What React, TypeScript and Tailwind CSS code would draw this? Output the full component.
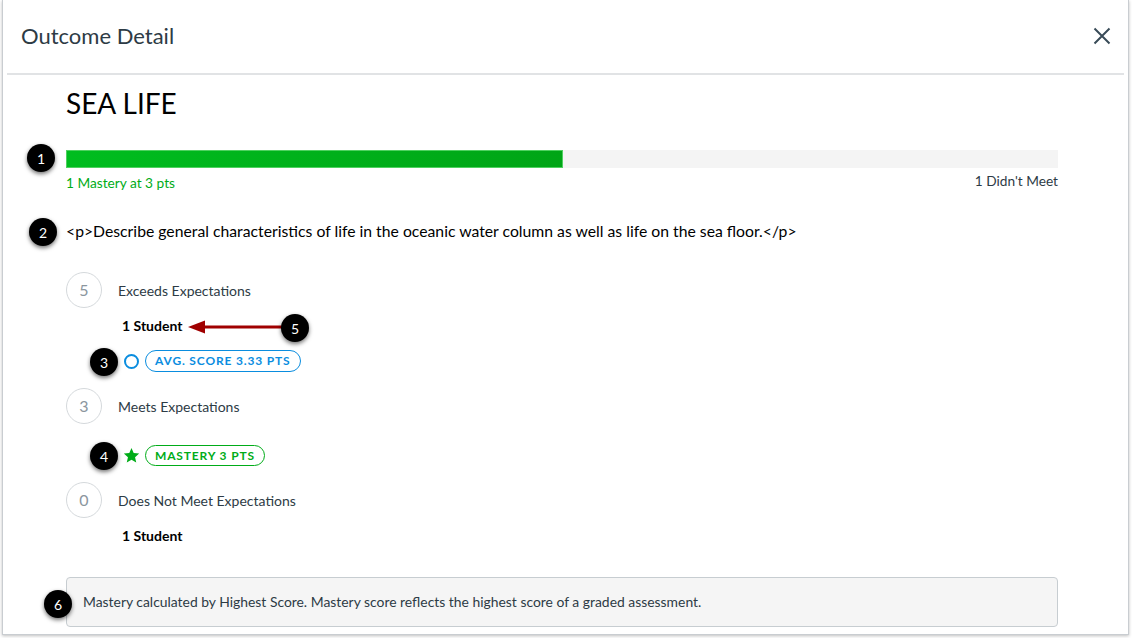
import React from 'react';

const font = { fontFamily: 'Lato, "Noto Sans", sans-serif' };

function Badge({ n, x, y }: { n: number; x: number; y: number }) {
  return (
    <div
      className="absolute flex h-[28px] w-[28px] items-center justify-center rounded-full bg-black text-[14px] text-white shadow-[0_2px_4px_rgba(0,0,0,0.55)]"
      style={{ left: x - 14, top: y - 14, fontFamily: 'Lato, sans-serif' }}
    >
      {n}
    </div>
  );
}

function Rating({ points, label }: { points: number; label: string }) {
  return (
    <div className="flex items-center gap-4">
      <div className="flex h-[36px] w-[36px] items-center justify-center rounded-full border border-[#d5d9dc] text-[16px] text-[#8b969e]">
        {points}
      </div>
      <span className="text-[14px] text-[#2d3b45]">{label}</span>
    </div>
  );
}

export default function App() {
  return (
    <div className="relative h-[638px] w-[1132px] overflow-hidden bg-white pl-[2px]" style={font}>
      <div className="h-[635px] w-[1127px] border border-t-0 border-[#c9cdd1] bg-white shadow-[0_1px_3px_rgba(0,0,0,0.25)]">
        <div className="flex h-[73px] items-center justify-between pb-[2px] pl-[18px] pr-[16px]">
          <h1 className="text-[22px] text-[#2d3b45]">Outcome Detail</h1>
          <svg width="20" height="20" viewBox="0 0 20 20" fill="none" stroke="#394b58" strokeWidth="2">
            <path d="M2.5 2.5l15 15M17.5 2.5l-15 15" />
          </svg>
        </div>
        <div className="mx-[4px] h-[2px] bg-[#e1e3e5]" />

        <div className="pl-[63px] text-[#2d3b45]">
          <h2 className="mt-[11px] text-[28px] leading-[34px] text-black">SEA LIFE</h2>

          <div className="mt-[30px] flex h-[18px] w-[992px] bg-[#f4f4f4]">
            <div className="h-full w-[497px] border border-[#4fd160] bg-[linear-gradient(90deg,#00bd1f,#00a516)]" />
          </div>
          <div className="mt-[5px] flex w-[992px] justify-between text-[13.7px] leading-[18px]">
            <span className="mt-[1px] text-[#00ac18]">1 Mastery at 3 pts</span>
            <span className="mt-[-1px] text-[#2d3b45]">1 Didn't Meet</span>
          </div>

          <p className="mt-[27px] text-[15.75px] leading-[24px] text-black">
            &lt;p&gt;Describe general characteristics of life in the oceanic water column as well as life on the sea floor.&lt;/p&gt;
          </p>

          <div className="mt-[29px]">
            <Rating points={5} label="Exceeds Expectations" />
          </div>
          <div className="ml-[56px] mt-[8px] text-[14px] font-bold leading-[20px] text-black">1 Student</div>
          <div className="ml-[58px] mt-[14px] flex h-[22px] items-center gap-[6px]">
            <span className="h-[15px] w-[15px] rounded-full border-2 border-[#0a8ddf]" />
            <span className="flex h-[22px] items-center rounded-full border border-[#0a8ddf] px-[9px] text-[12px] font-bold tracking-[0.07em] text-[#0a8ddf]">
              AVG. SCORE 3.33 PTS
            </span>
          </div>

          <div className="mt-[16px]">
            <Rating points={3} label="Meets Expectations" />
          </div>
          <div className="ml-[57px] mt-[21px] flex h-[21px] items-center gap-[5px]">
            <svg width="17" height="17" viewBox="0 0 24 24" fill="#00ac18">
              <path d="M12 1.5l3.1 7.1 7.7.7-5.8 5.1 1.7 7.6L12 18l-6.7 4 1.7-7.6-5.8-5.1 7.7-.7z" />
            </svg>
            <span className="flex h-[21px] items-center rounded-full border border-[#00ac18] px-[9px] text-[12px] font-bold tracking-[0.07em] text-[#00ac18]">
              MASTERY 3 PTS
            </span>
          </div>

          <div className="mt-[16px]">
            <Rating points={0} label="Does Not Meet Expectations" />
          </div>
          <div className="ml-[56px] mt-[8px] text-[14px] font-bold leading-[20px] text-black">1 Student</div>

          <div className="mt-[31px] flex h-[50px] w-[992px] items-center rounded-[4px] border border-[#c7cdd1] bg-[#f5f5f5] pl-[16px] text-[13.9px] text-[#2d3b45]">
            Mastery calculated by Highest Score. Mastery score reflects the highest score of a graded assessment.
          </div>
        </div>
      </div>

      <svg className="absolute left-[186px] top-[319px]" width="100" height="16" viewBox="0 0 100 16">
        <path d="M16 8H98" stroke="#a00000" strokeWidth="3" />
        <path d="M2 8L19 1.5V14.5Z" fill="#a00000" />
      </svg>

      <Badge n={1} x={41} y={158} />
      <Badge n={2} x={43} y={232} />
      <Badge n={3} x={104} y={362} />
      <Badge n={4} x={104} y={456} />
      <Badge n={5} x={295} y={328} />
      <Badge n={6} x={58} y={604} />
    </div>
  );
}
